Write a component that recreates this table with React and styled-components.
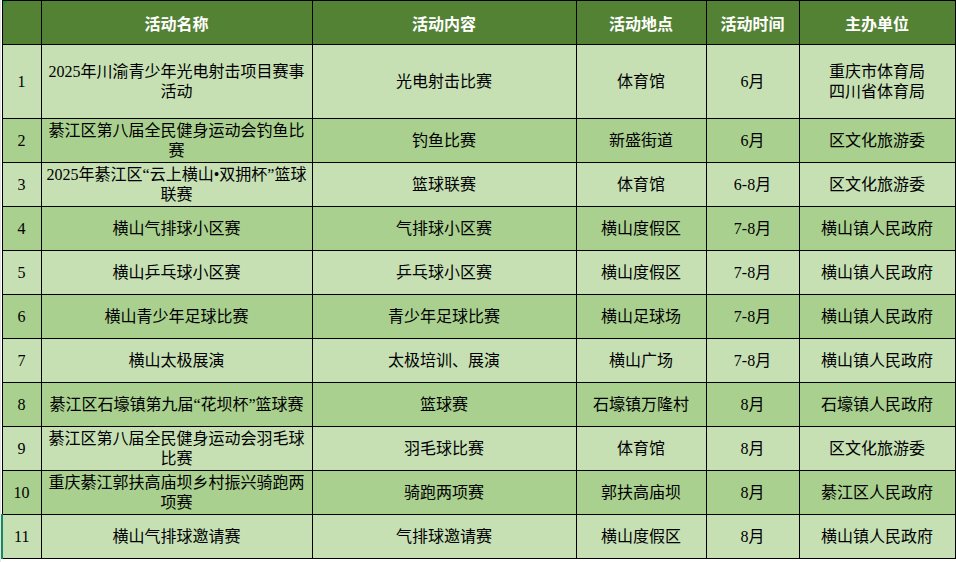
import React from 'react';
import styled, { createGlobalStyle } from 'styled-components';

const GlobalStyle = createGlobalStyle`
  html, body {
    margin: 0;
    padding: 0;
    background: #ffffff;
  }
`;

const Page = styled.div`
  display: flex;
  min-height: 562px;
  border-left: 1px solid #e4e4e4;
  box-sizing: border-box;
`;

const Sheet = styled.table`
  border-collapse: collapse;
  table-layout: fixed;
  width: 953px;
  height: max-content;
  font-family: "Liberation Serif", "Noto Sans CJK SC", serif;
  font-size: 16px;
  line-height: 20px;
  color: #000;
`;

const HeadCell = styled.th`
  position: relative;
  height: 43px;
  padding: 0;
  border: 1px solid #000;
  background: #548235;
  color: #ffffff;
  font-family: "Noto Sans CJK SC", sans-serif;
  font-size: 16px;
  font-weight: 700;
  text-align: center;
  vertical-align: middle;

  &:first-child::before {
    content: '';
    position: absolute;
    top: 0;
    left: 0;
    border-top: 5px solid #1e8f32;
    border-right: 5px solid transparent;
  }
`;

const Row = styled.tr`
  background: ${p => (p.$dark ? '#a9d08e' : '#c6e0b4')};
`;

const Cell = styled.td`
  height: ${p => (p.$tall ? '73px' : '43px')};
  padding: 0 2px;
  border: 1px solid #000;
  ${p => p.$marked && 'border-left: 2px solid #168a5f;'}
  text-align: center;
  vertical-align: middle;
  white-space: nowrap;
  overflow: hidden;
`;

const Line = styled.div`
  display: block;
`;

const columns = [
  { title: '', width: 39 },
  { title: '活动名称', width: 271 },
  { title: '活动内容', width: 264 },
  { title: '活动地点', width: 130 },
  { title: '活动时间', width: 93 },
  { title: '主办单位', width: 156 },
];

const rows = [
  [['2025年川渝青少年光电射击项目赛事', '活动'], '光电射击比赛', '体育馆', '6月', ['重庆市体育局', '四川省体育局']],
  [['綦江区第八届全民健身运动会钓鱼比', '赛'], '钓鱼比赛', '新盛街道', '6月', '区文化旅游委'],
  [['2025年綦江区“云上横山•双拥杯”篮球', '联赛'], '篮球联赛', '体育馆', '6-8月', '区文化旅游委'],
  ['横山气排球小区赛', '气排球小区赛', '横山度假区', '7-8月', '横山镇人民政府'],
  ['横山乒乓球小区赛', '乒乓球小区赛', '横山度假区', '7-8月', '横山镇人民政府'],
  ['横山青少年足球比赛', '青少年足球比赛', '横山足球场', '7-8月', '横山镇人民政府'],
  ['横山太极展演', '太极培训、展演', '横山广场', '7-8月', '横山镇人民政府'],
  ['綦江区石壕镇第九届“花坝杯”篮球赛', '篮球赛', '石壕镇万隆村', '8月', '石壕镇人民政府'],
  [['綦江区第八届全民健身运动会羽毛球', '比赛'], '羽毛球比赛', '体育馆', '8月', '区文化旅游委'],
  [['重庆綦江郭扶高庙坝乡村振兴骑跑两', '项赛'], '骑跑两项赛', '郭扶高庙坝', '8月', '綦江区人民政府'],
  ['横山气排球邀请赛', '气排球邀请赛', '横山度假区', '8月', '横山镇人民政府'],
];

function Text({ value }) {
  if (Array.isArray(value)) {
    return value.map((line, i) => <Line key={i}>{line}</Line>);
  }
  return value;
}

export default function App() {
  return (
    <>
      <GlobalStyle />
      <Page>
        <Sheet>
          <colgroup>
            {columns.map((c, i) => (
              <col key={i} style={{ width: c.width }} />
            ))}
          </colgroup>
          <thead>
            <tr>
              {columns.map((c, i) => (
                <HeadCell key={i}>{c.title}</HeadCell>
              ))}
            </tr>
          </thead>
          <tbody>
            {rows.map((r, i) => (
              <Row key={i} $dark={i % 2 === 1}>
                <Cell $tall={i === 0} $marked={i === rows.length - 1}>{i + 1}</Cell>
                {r.map((v, j) => (
                  <Cell key={j} $tall={i === 0}>
                    <Text value={v} />
                  </Cell>
                ))}
              </Row>
            ))}
          </tbody>
        </Sheet>
      </Page>
    </>
  );
}
